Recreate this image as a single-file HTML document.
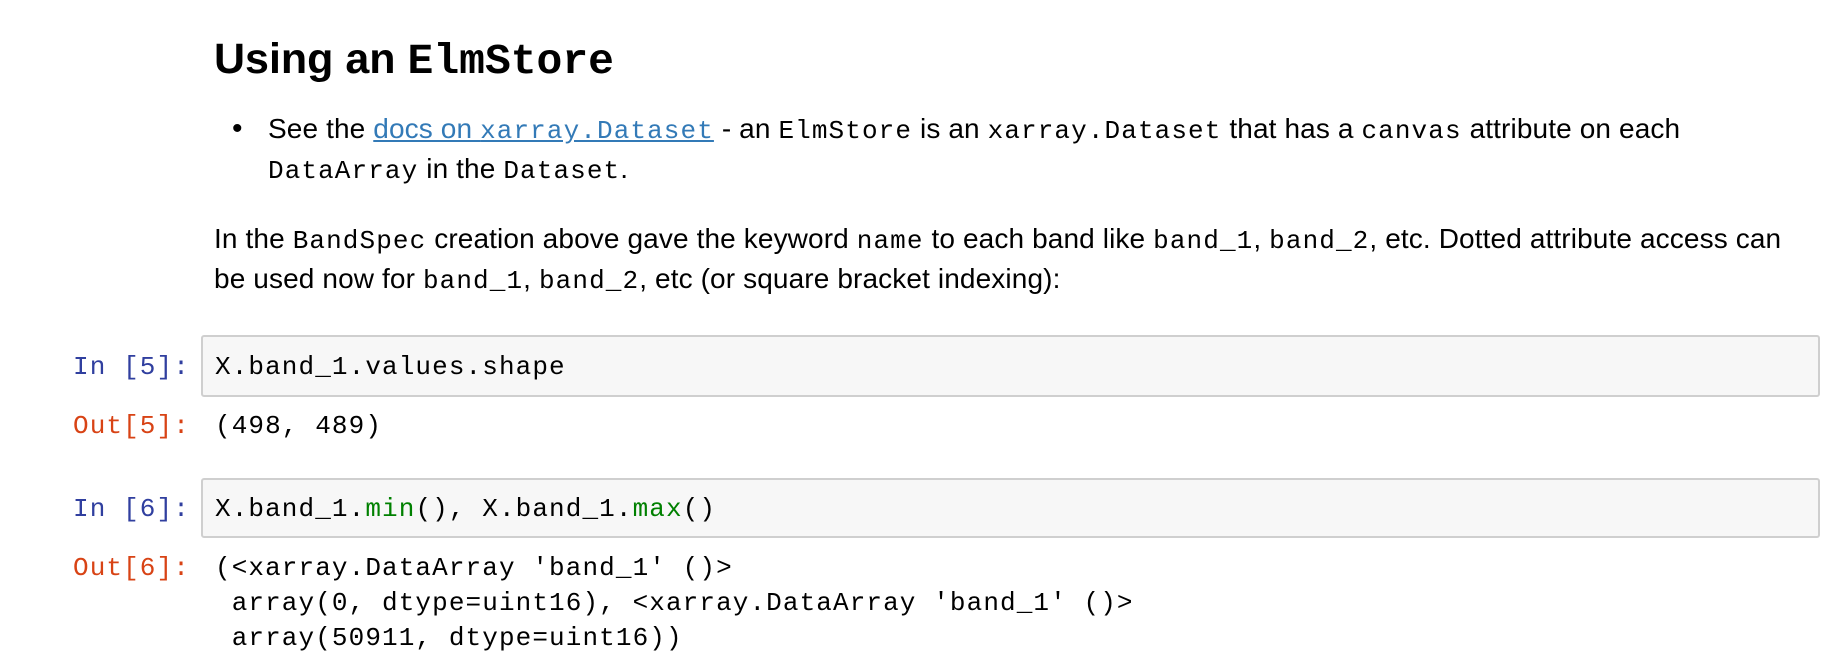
<!DOCTYPE html>
<html><head><meta charset="utf-8"><style>
html,body{margin:0;padding:0;background:#fff;width:1836px;height:664px;overflow:hidden}
.a{position:absolute;white-space:nowrap}
.s{font-family:"Liberation Sans",Arial,sans-serif;font-size:28px;line-height:40px;color:#000;letter-spacing:0.12px}
.m,code{font-family:"Liberation Mono",monospace;font-size:26px;letter-spacing:1.1px}
.h{font-family:"Liberation Sans",sans-serif;font-weight:bold;font-size:43px;line-height:50px;color:#000}
.h code{font-size:43px;letter-spacing:0}
a{color:#337ab7;text-decoration:underline}
.c{line-height:35px;color:#000;white-space:pre}
.in{color:#303f9f}.out{color:#d84315}.g{color:#008000}
.box{position:absolute;background:#f7f7f7;border:2px solid #cfcfcf;border-radius:3px}
</style></head><body>
<div class="a h" style="left:214px;top:34px">Using an <code>ElmStore</code></div>
<div class="a s" style="left:232px;top:109px;font-size:30px">•</div>
<div class="a s" style="left:268px;top:109px">See the <a>docs on <code>xarray.Dataset</code></a> - an <code>ElmStore</code> is an <code>xarray.Dataset</code> that has a <code>canvas</code> attribute on each</div>
<div class="a s" style="left:268px;top:149px"><code>DataArray</code> in the <code>Dataset</code>.</div>
<div class="a s" style="left:214px;top:219px">In the <code>BandSpec</code> creation above gave the keyword <code>name</code> to each band like <code>band_1</code>, <code>band_2</code>, etc. Dotted attribute access can</div>
<div class="a s" style="left:214px;top:259px">be used now for <code>band_1</code>, <code>band_2</code>, etc (or square bracket indexing):</div>

<div class="box" style="left:201px;top:335px;width:1615px;height:58px"></div>
<div class="a m c in" style="left:73px;top:350px">In [5]:</div>
<div class="a m c" style="left:215px;top:350px">X.band_1.values.shape</div>
<div class="a m c out" style="left:73px;top:409px">Out[5]:</div>
<div class="a m c" style="left:215px;top:409px">(498, 489)</div>

<div class="box" style="left:201px;top:478px;width:1615px;height:56px"></div>
<div class="a m c in" style="left:73px;top:492px">In [6]:</div>
<div class="a m c" style="left:215px;top:492px">X.band_1.<span class="g">min</span>(), X.band_1.<span class="g">max</span>()</div>
<div class="a m c out" style="left:73px;top:551px">Out[6]:</div>
<div class="a m c" style="left:215px;top:551px">(&lt;xarray.DataArray 'band_1' ()&gt;
 array(0, dtype=uint16), &lt;xarray.DataArray 'band_1' ()&gt;
 array(50911, dtype=uint16))</div>
</body></html>
